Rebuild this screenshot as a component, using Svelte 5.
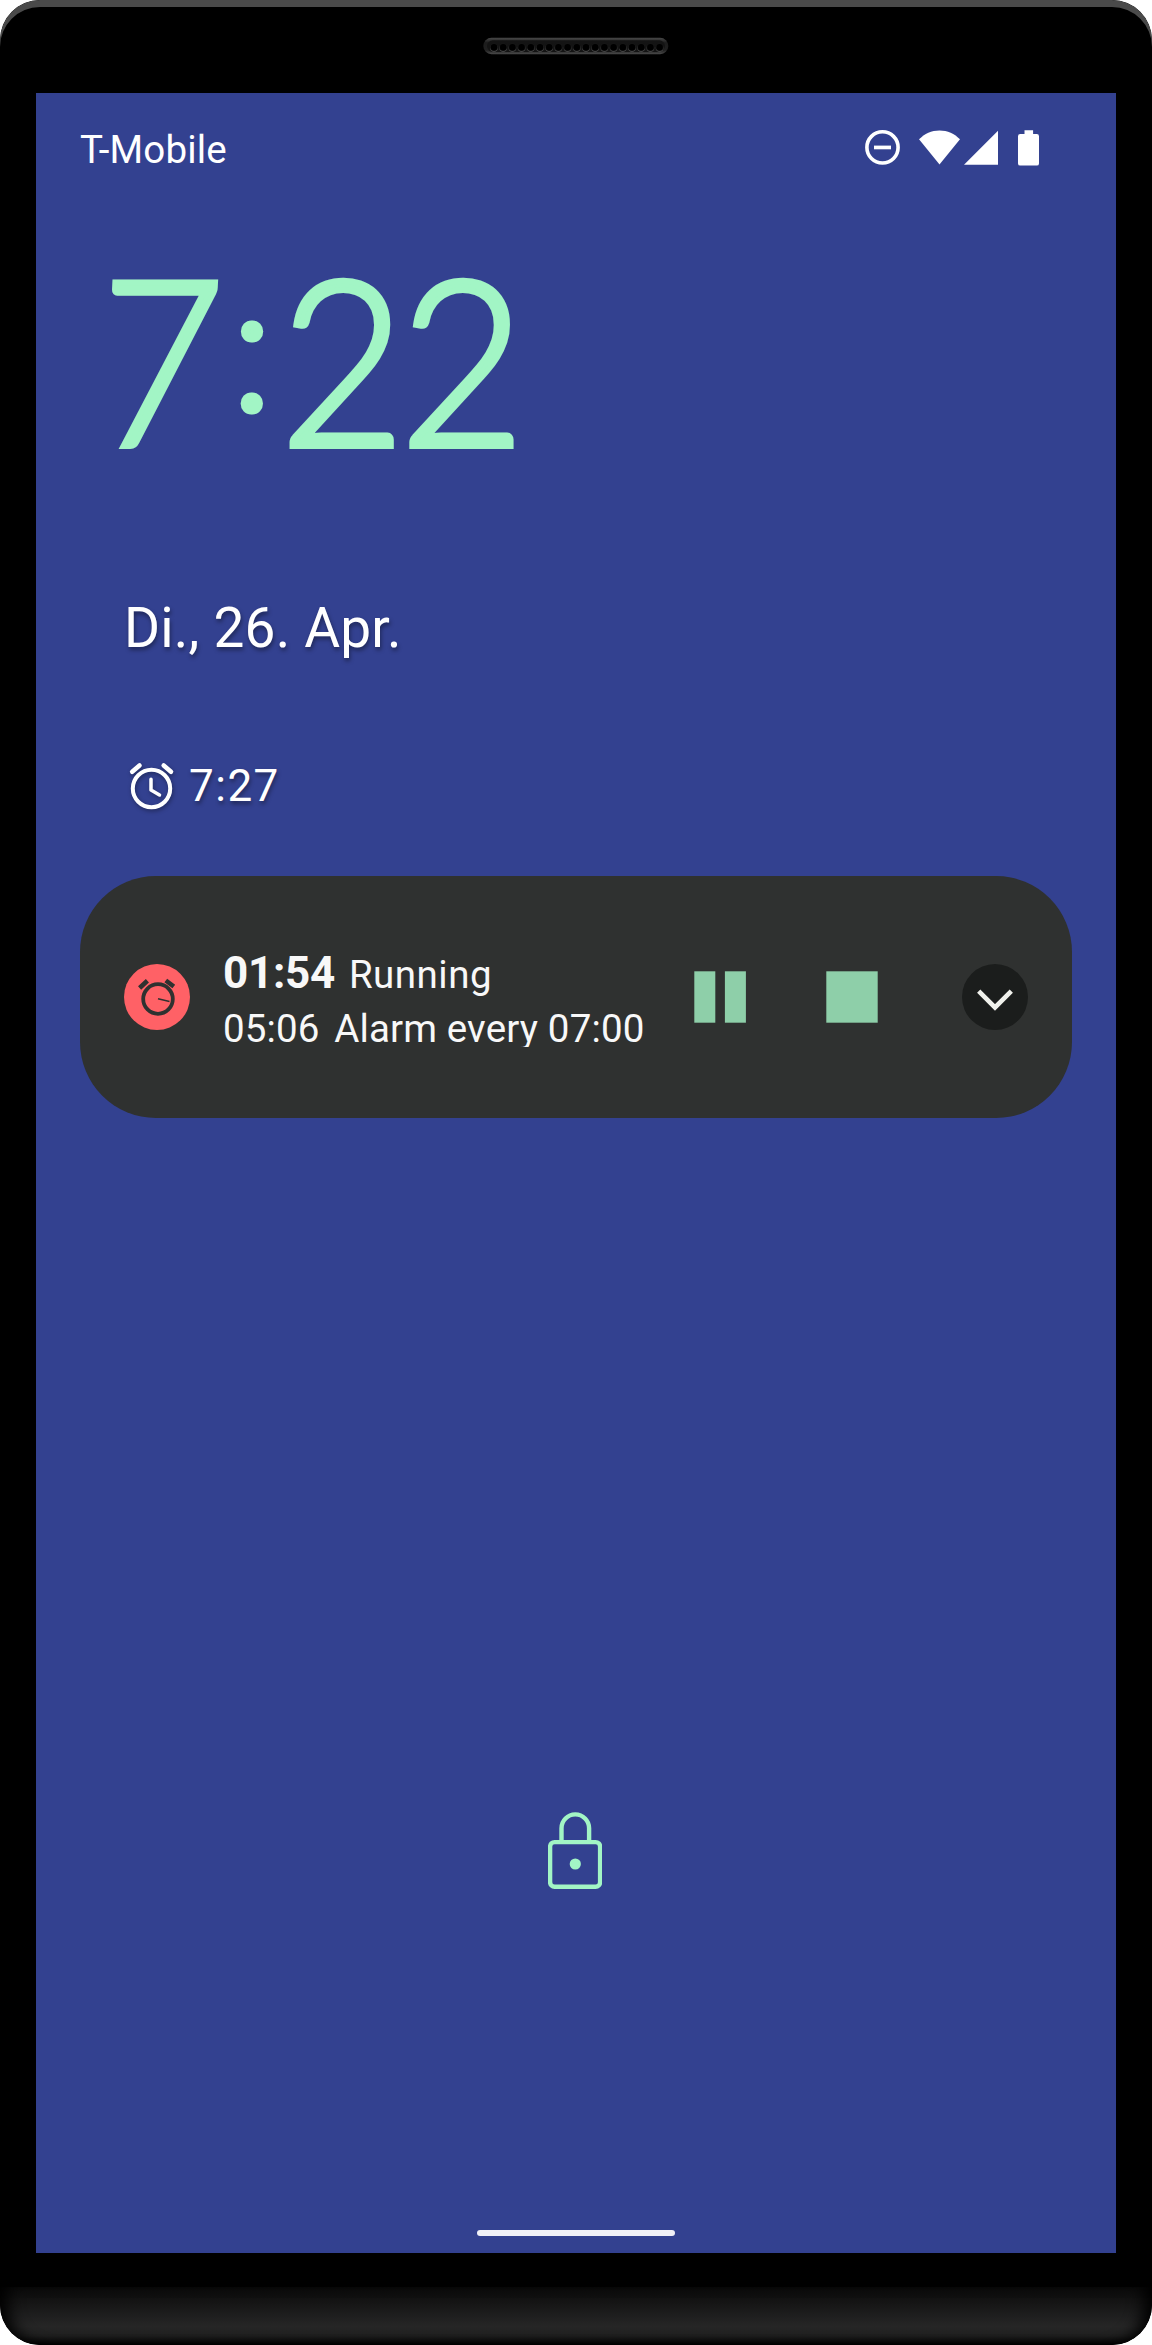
<script>
  const holes = Array.from({ length: 19 }, (_, i) => 11 + i * 9.2);
</script>

<div class="phone">
  <header class="top-bezel">
    <svg class="speaker" width="186" height="18" viewBox="0 0 186 18" aria-hidden="true">
      <defs>
        <linearGradient id="rim" x1="0" y1="0" x2="0" y2="1">
          <stop offset="0" stop-color="#484848" />
          <stop offset=".3" stop-color="#1c1c1c" />
          <stop offset=".75" stop-color="#202020" />
          <stop offset="1" stop-color="#4a4a4a" />
        </linearGradient>
      </defs>
      <rect x=".3" y=".8" width="185" height="16.400" rx="8.200" fill="url(#rim)" />
      <rect x="4" y="3.200" width="178" height="11.800" rx="5.900" fill="#141414" />
      {#each holes as x}
        <circle cx={x} cy="11" r="3.800" fill="#555" />
        <circle cx={x} cy="10" r="3.900" fill="#161616" />
        <circle cx={x} cy="10.200" r="3.200" fill="#000" />
      {/each}
    </svg>
  </header>

  <main class="screen">
    <div class="status">
      <span class="carrier">T-Mobile</span>
      <svg class="icons" width="175" height="36" viewBox="0 0 175 36" fill="#fff" aria-hidden="true">
        <circle cx="17.500" cy="17.400" r="15.600" fill="none" stroke="#fff" stroke-width="3.600" />
        <rect x="9" y="15.600" width="17" height="3.700" />
        <path d="M54 9.300C59.500 3.600 66.500.4 74.500.4S89.500 3.600 95 9.300L74.500 34.600Z" />
        <path d="M133 .8V34.700H99Z" />
        <path d="M159.500 .3h8.600v3.700h3.700a2.200 2.200 0 0 1 2.200 2.200v27.200a2.200 2.200 0 0 1-2.200 2.200h-16.600a2.200 2.200 0 0 1-2.200-2.200V6.200a2.200 2.200 0 0 1 2.200-2.200h4.300z" />
      </svg>
    </div>

    <div class="clock"><span class="hour">7</span><span class="colon">:</span><span class="minutes">22</span></div>
    <div class="date">Di., 26. Apr.</div>

    <div class="next-alarm">
      <svg class="alarm-icon" width="46" height="48" viewBox="0 0 46 48" fill="none" stroke="#fff" stroke-linecap="round" aria-hidden="true">
        <circle cx="22.500" cy="25.500" r="18.700" stroke-width="4" />
        <path d="M3.200 8.700l7.300-6.200M42 8.700l-7.300-6.200" stroke-width="4.600" />
        <path d="M22 16.300v10.700l8.500 5" stroke-width="3.500" stroke-linejoin="round" />
      </svg>
      <span>7:27</span>
    </div>

    <section class="card">
      <svg class="app-icon" width="66" height="66" viewBox="0 0 66 66" aria-hidden="true">
        <circle cx="33" cy="33" r="33" fill="#ff6166" />
        <g fill="none" stroke="#2f3130">
          <circle cx="34" cy="35" r="14.800" stroke-width="3.800" />
          <path d="M15.600 24l7.800-7.200M41.800 16.500l8 6" stroke-width="4.600" />
          <path d="M34 34.700l11.500 2.800" stroke-width="1.400" />
        </g>
      </svg>
      <div class="text">
        <div class="primary"><b>01:54</b><span class="state">Running</span></div>
        <div class="secondary"><span>05:06</span><span class="desc">Alarm every 07:00</span></div>
      </div>
      <svg class="pause" width="52" height="52" viewBox="0 0 52 52" fill="#8ecfa9" aria-hidden="true">
        <rect x=".3" y=".3" width="21" height="51.400" />
        <rect x="30.900" y=".3" width="21" height="51.400" />
      </svg>
      <svg class="stop" width="52" height="52" viewBox="0 0 52 52" fill="#8ecfa9" aria-hidden="true">
        <rect x=".3" y=".3" width="51.400" height="51.400" />
      </svg>
      <svg class="expand" width="66" height="66" viewBox="0 0 66 66" aria-hidden="true">
        <circle cx="33" cy="33" r="33" fill="#1b1d1c" />
        <path d="M16.700 27.200L33 43.500l16.300-16.300" fill="none" stroke="#f0f1ec" stroke-width="4.600" />
      </svg>
    </section>

    <svg class="lock" width="54" height="78" viewBox="0 0 54 78" fill="none" stroke="#a2f5c5" stroke-width="4.400" aria-hidden="true">
      <rect x="2.100" y="30.100" width="50" height="44.700" rx="4.500" />
      <path d="M13.500 30V16.200a13.800 13.800 0 0 1 27.600 0V30" />
      <circle cx="27.300" cy="52" r="5.600" fill="#a2f5c5" stroke="none" />
    </svg>

    <div class="home"></div>
  </main>

  <footer class="chin"></footer>
</div>

<style>
  :global(body) {
    background: #fff;
  }

  .phone {
    position: relative;
    display: flex;
    flex-direction: column;
    width: 1152px;
    height: 2345px;
    overflow: hidden;
    border-radius: 40px;
    background: #000;
    font-family: Roboto, "Liberation Sans", sans-serif;
    color: #fff;
  }

  /* Glossy edge that thins out round both upper corners */
  .phone::before {
    content: "";
    position: absolute;
    inset: 0 0 auto;
    height: 90px;
    border-radius: 40px 40px 0 0;
    box-shadow: inset 0 7px 0 #4a4a4a;
  }

  .top-bezel {
    display: flex;
    justify-content: center;
    flex: none;
    height: 93px;
    padding-top: 37px;
    box-sizing: border-box;
  }

  .screen {
    display: flex;
    flex-direction: column;
    flex: none;
    width: 1080px;
    height: 2160px;
    margin: 0 36px;
    padding: 34px 44px 17px;
    box-sizing: border-box;
    background: #334190;
  }

  .status {
    display: flex;
    justify-content: space-between;
    height: 46px;
    padding-right: 32px;
    line-height: 46px;
    font-size: 38.5px;
    letter-spacing: 0.15px;
  }

  .icons {
    margin-top: 3px;
  }

  .clock {
    display: flex;
    margin: 64px 0 0 22px;
    height: 240px;
    line-height: 240px;
    font-family: Lato, Roboto, sans-serif;
    font-size: 231px;
    font-weight: 300;
    color: #a2f5c5;
    -webkit-text-stroke: 6px #a2f5c5;
  }

  .hour {
    width: 120px;
    transform: skewX(-3deg) scaleX(0.92);
    transform-origin: 0 42px;
  }

  .colon {
    width: 60px;
    margin-top: -2px;
    text-align: center;
    font-family: Roboto, sans-serif;
    font-size: 160px;
    -webkit-text-stroke-width: 9px;
  }

  .minutes {
    margin-left: -2px;
    letter-spacing: -6px;
    transform: scaleX(0.935);
    transform-origin: left;
  }

  .date {
    margin: 119px 0 0 44px;
    line-height: 64px;
    font-size: 55px;
    letter-spacing: 0.2px;
    text-shadow: 1px 3px 4px rgba(0, 0, 0, 0.4);
  }

  .next-alarm {
    display: flex;
    margin: 100px 0 0 49px;
    height: 52px;
    line-height: 52px;
    font-size: 44px;
    letter-spacing: 1.5px;
    font-kerning: none;
    text-shadow: 1px 3px 4px rgba(0, 0, 0, 0.4);
  }

  .alarm-icon {
    margin: 3px 14px 0 0;
    overflow: visible;
    filter: drop-shadow(1px 2px 2px rgba(0, 0, 0, 0.35));
  }

  .card {
    display: flex;
    align-items: center;
    flex: none;
    height: 242px;
    margin-top: 64px;
    padding: 0 44px;
    box-sizing: border-box;
    border-radius: 76px;
    background: #2f3130;
    color: #f8f8f8;
  }

  .text {
    align-self: flex-start;
    width: 471px;
    margin: 71px 0 0 33px;
    white-space: nowrap;
    font-size: 38.5px;
  }

  .primary {
    display: flex;
    align-items: baseline;
    height: 52px;
    line-height: 52px;
  }

  .primary b {
    font-size: 44px;
    letter-spacing: -0.3px;
  }

  .state {
    margin-left: 14px;
    letter-spacing: 0.5px;
  }

  .secondary {
    height: 41px;
    margin-top: 7px;
    overflow: hidden;
    line-height: 46px;
    letter-spacing: 0.15px;
  }

  .desc {
    margin-left: 14.5px;
  }

  .stop {
    margin: 0 84px 0 80px;
  }

  .lock {
    flex: none;
    margin: 694px auto 0 468px;
  }

  .home {
    width: 198px;
    height: 6px;
    margin: auto auto 0;
    border-radius: 3px;
    background: #f0f0f7;
  }

  .chin {
    flex: none;
    height: 58px;
    margin-top: 34px;
    border-radius: 0 0 40px 40px;
    background: linear-gradient(#0b0b0b, #141414 25%, #262626 68%, #1f1f1f 84%, #000);
    box-shadow: inset 16px 0 16px -8px #000, inset -16px 0 16px -8px #000;
  }
</style>
